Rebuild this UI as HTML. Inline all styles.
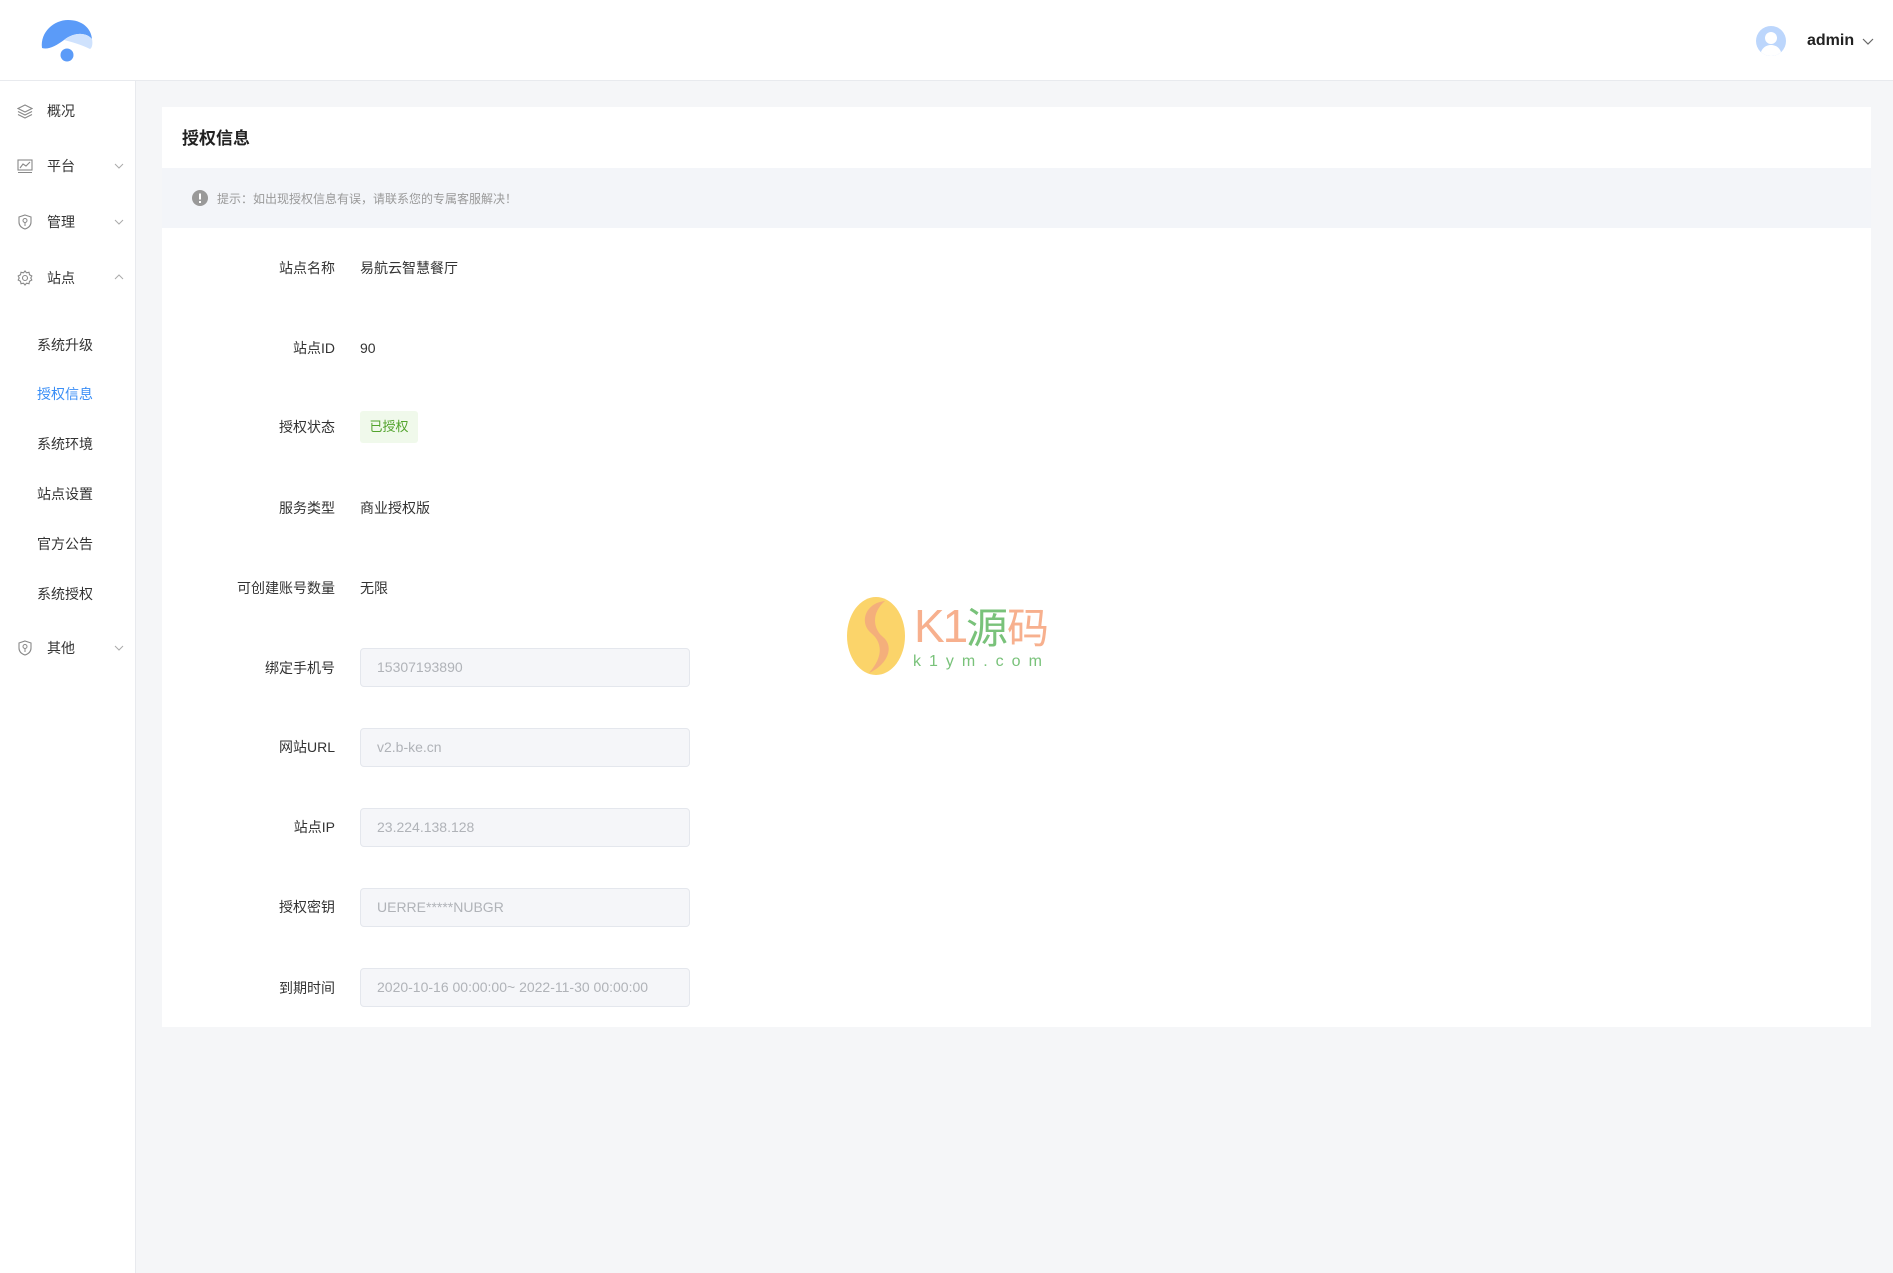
<!DOCTYPE html>
<html><head><meta charset="utf-8"><style>
*{margin:0;padding:0;box-sizing:border-box}
body{width:1893px;height:1273px;background:#f5f6f8;font-family:"Liberation Sans","Noto Sans CJK SC",sans-serif;position:relative;overflow:hidden;color:#333}
.hdr{position:absolute;left:0;top:0;width:1893px;height:81px;background:#fff;border-bottom:1px solid #e8eaee}
.side{position:absolute;left:0;top:81px;width:136px;height:1192px;background:#fff;border-right:1px solid #e8eaee}
.mi{position:absolute;left:47px;font-size:14px;color:#333;line-height:20px}
.ic{position:absolute;left:17px;width:16px;height:16px}
.chev{position:absolute;left:114px;width:10px;height:6px}
.sub{position:absolute;left:37px;font-size:14px;color:#333;line-height:20px}
.card{position:absolute;left:162px;top:107px;width:1709px;height:920px;background:#fff}
.title{position:absolute;left:20px;top:17px;font-size:17px;font-weight:bold;color:#222}
.alert{position:absolute;left:0;top:61px;width:1709px;height:60px;background:#f3f5f9}
.alert span{position:absolute;left:55px;top:22px;font-size:12px;color:#999}
.lbl{position:absolute;right:1536px;font-size:14px;color:#333;line-height:20px;text-align:right;white-space:nowrap}
.val{position:absolute;left:198px;font-size:14px;color:#333;line-height:20px}
.inp{position:absolute;left:198px;width:330px;height:39px;background:#f5f6f9;border:1px solid #e4e7ed;border-radius:4px;font-size:14px;color:#b0b3b8;padding-left:16px;line-height:37px}
</style></head><body>
<div class="hdr">
<svg style="position:absolute;left:40px;top:18px" width="54" height="46" viewBox="0 0 54 46">
<path d="M2 30 C0 14 14 2 28 2 C42 2 51 10 52 21 C46 14 34 14 24 22 C16 28 8 32 2 30Z" fill="#5b9bf8"/>
<path d="M24 22 C34 14 46 14 52 21 C53 26 52 30 50 31 C44 28 36 25 24 22Z" fill="#cfe2fd"/>
<circle cx="27" cy="37" r="6.5" fill="#5b9bf8"/>
</svg>
<svg style="position:absolute;left:1756px;top:26px" width="30" height="30" viewBox="0 0 30 30">
<defs><clipPath id="c"><circle cx="15" cy="15" r="15"/></clipPath></defs>
<circle cx="15" cy="15" r="15" fill="#bcd6fc"/>
<g clip-path="url(#c)"><circle cx="15" cy="12" r="6" fill="#fff"/><path d="M4 30 C5 22 10 19 15 19 C20 19 25 22 26 30Z" fill="#fff"/></g>
</svg>
<div style="position:absolute;left:1807px;top:32px;font-size:16px;font-weight:bold;color:#222">admin</div>
<svg style="position:absolute;left:1862px;top:38px" width="12" height="7" viewBox="0 0 12 7"><path d="M1 1 L6 6 L11 1" fill="none" stroke="#666" stroke-width="1.2"/></svg>
</div>
<div class="side">
<svg class="ic" style="top:22px" viewBox="0 0 16 16"><path d="M8 2 L15 5.5 L8 9 L1 5.5Z M1 8.5 L8 12 L15 8.5 M1 11.5 L8 15 L15 11.5" fill="none" stroke="#888" stroke-width="1.1"/></svg>
<div class="mi" style="top:20px">概况</div>
<svg class="ic" style="top:77px" viewBox="0 0 16 16"><rect x="1" y="2" width="14" height="10" fill="none" stroke="#888" stroke-width="1.1"/><path d="M3 10 L6 6 L9 8 L13 4 M1 14.5 H15" fill="none" stroke="#888" stroke-width="1.1"/></svg>
<div class="mi" style="top:75px">平台</div>
<svg class="chev" style="top:82px" viewBox="0 0 10 6"><path d="M1 1 L5 5 L9 1" fill="none" stroke="#aaa"/></svg>
<svg class="ic" style="top:133px" viewBox="0 0 16 16"><path d="M8 1 L14 3 V8 C14 12 11 14 8 15 C5 14 2 12 2 8 V3Z" fill="none" stroke="#888" stroke-width="1.1"/><circle cx="8" cy="6.5" r="2" fill="none" stroke="#888"/><path d="M8 8.5 V12" stroke="#888"/></svg>
<div class="mi" style="top:131px">管理</div>
<svg class="chev" style="top:138px" viewBox="0 0 10 6"><path d="M1 1 L5 5 L9 1" fill="none" stroke="#aaa"/></svg>
<svg class="ic" style="top:189px" viewBox="0 0 16 16"><circle cx="8" cy="8" r="2.5" fill="none" stroke="#888" stroke-width="1.1"/><path d="M8 1 L9.5 2.8 L12 2.3 L12.5 4.8 L14.8 6 L13.8 8 L14.8 10 L12.5 11.2 L12 13.7 L9.5 13.2 L8 15 L6.5 13.2 L4 13.7 L3.5 11.2 L1.2 10 L2.2 8 L1.2 6 L3.5 4.8 L4 2.3 L6.5 2.8Z" fill="none" stroke="#888" stroke-width="1.1"/></svg>
<div class="mi" style="top:187px">站点</div>
<svg class="chev" style="top:193px" viewBox="0 0 10 6"><path d="M1 5 L5 1 L9 5" fill="none" stroke="#aaa"/></svg>
<div class="sub" style="top:254px">系统升级</div>
<div class="sub" style="top:303px;color:#3a8ef6">授权信息</div>
<div class="sub" style="top:353px">系统环境</div>
<div class="sub" style="top:403px">站点设置</div>
<div class="sub" style="top:453px">官方公告</div>
<div class="sub" style="top:503px">系统授权</div>
<svg class="ic" style="top:559px" viewBox="0 0 16 16"><path d="M8 1 L14 3 V8 C14 12 11 14 8 15 C5 14 2 12 2 8 V3Z" fill="none" stroke="#888" stroke-width="1.1"/><circle cx="8" cy="6.5" r="2" fill="none" stroke="#888"/><path d="M8 8.5 V12" stroke="#888"/></svg>
<div class="mi" style="top:557px">其他</div>
<svg class="chev" style="top:564px" viewBox="0 0 10 6"><path d="M1 1 L5 5 L9 1" fill="none" stroke="#aaa"/></svg>
</div>
<div class="card">
<div class="title">授权信息</div>
<div class="alert">
<svg style="position:absolute;left:30px;top:22px" width="16" height="16" viewBox="0 0 16 16"><circle cx="8" cy="8" r="8" fill="#999"/><rect x="7" y="3.5" width="2" height="6" fill="#fff"/><rect x="7" y="11" width="2" height="2" fill="#fff"/></svg>
<span>提示：如出现授权信息有误，请联系您的专属客服解决！</span>
</div>
<div class="lbl" style="top:151px">站点名称</div><div class="val" style="top:151px">易航云智慧餐厅</div>
<div class="lbl" style="top:231px">站点ID</div><div class="val" style="top:231px">90</div>
<div class="lbl" style="top:310px">授权状态</div>
<div style="position:absolute;left:198px;top:304px;width:58px;height:32px;background:#f0f9eb;border-radius:3px;color:#52a32c;font-size:13px;line-height:32px;text-align:center">已授权</div>
<div class="lbl" style="top:391px">服务类型</div><div class="val" style="top:391px">商业授权版</div>
<div class="lbl" style="top:471px">可创建账号数量</div><div class="val" style="top:471px">无限</div>
<div class="lbl" style="top:551px">绑定手机号</div><div class="inp" style="top:541px">15307193890</div>
<div class="lbl" style="top:630px">网站URL</div><div class="inp" style="top:621px">v2.b-ke.cn</div>
<div class="lbl" style="top:710px">站点IP</div><div class="inp" style="top:701px">23.224.138.128</div>
<div class="lbl" style="top:790px">授权密钥</div><div class="inp" style="top:781px">UERRE*****NUBGR</div>
<div class="lbl" style="top:871px">到期时间</div><div class="inp" style="top:861px">2020-10-16 00:00:00~ 2022-11-30 00:00:00</div>
</div>
<svg style="position:absolute;left:845px;top:595px" width="62" height="82" viewBox="0 0 62 82"><ellipse cx="31" cy="41" rx="29" ry="39" fill="#fbd46a"/><path d="M40 6 C20 8 14 28 26 38 C36 46 40 60 24 78 C42 70 50 52 38 42 C28 34 26 18 40 6Z" fill="#f3a580" opacity="0.8"/></svg>
<div style="position:absolute;left:914px;top:600px;font-size:46px;color:#f7b08e;line-height:52px;letter-spacing:-2px">K1</div>
<div style="position:absolute;left:966px;top:598px;font-size:42px;color:#79c27a;line-height:56px;font-family:'Noto Sans CJK SC',sans-serif">源</div>
<div style="position:absolute;left:1007px;top:598px;font-size:42px;color:#f7b08e;line-height:56px;font-family:'Noto Sans CJK SC',sans-serif">码</div>
<div style="position:absolute;left:913px;top:653px;font-size:16px;color:#79c27a;letter-spacing:8px">k1ym.com</div>
</body></html>
